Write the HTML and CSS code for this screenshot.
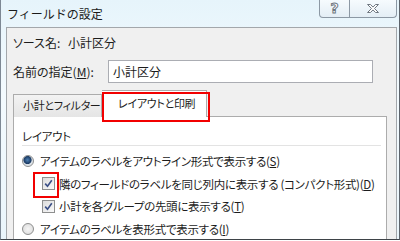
FILE: index.html
```html
<!DOCTYPE html>
<html lang="ja">
  <head>
    <meta charset="utf-8">
    <title>フィールドの設定</title>
    <link rel="stylesheet" href="styles.css">
  </head>
  <body>
    <div class="window">
      <div class="titlebar">
        <span class="title">フィールドの設定</span>
        <div class="caption">
          <span class="cbtn help">?</span>
          <span class="cbtn close">
            <svg width="14" height="11" viewBox="0 0 14 11">
              <path d="M1.5 1.5h3l2.5 2.6 2.5-2.6h3l-4 4 4 4h-3l-2.5-2.6-2.5 2.6h-3l4-4z" fill="#fff" stroke="#6f7780" stroke-width="1" stroke-linejoin="round"/>
            </svg>
          </span>
        </div>
      </div>
      <div class="client">
        <div class="row source">
          <span class="src-label">ソース名:</span><span>小計区分</span>
        </div>
        <div class="row name">
          <label class="name-label">名前の指定(<u>M</u>):</label>
          <div class="input">小計区分</div>
        </div>
        <div class="tabs">
          <div class="tab">小計とフィルター</div>
          <div class="tab active marked">レイアウトと印刷</div>
        </div>
        <div class="panel">
          <div class="group-title">レイアウト</div>
          <div class="opt">
            <span class="radio on"></span>
            <span>アイテムのラベルをアウトライン形式で表示する(<u>S</u>)</span>
          </div>
          <div class="opt sub">
            <span class="check marked">
              <svg width="11" height="11" viewBox="0 0 11 11"><path d="M2.2 5.6l2.3 2.6L8.8 2.2" fill="none" stroke="#3b4f86" stroke-width="1.6"/></svg>
            </span>
            <span>隣のフィールドのラベルを同じ列内に表示する (コンパクト形式)(<u>D</u>)</span>
          </div>
          <div class="opt sub">
            <span class="check">
              <svg width="11" height="11" viewBox="0 0 11 11"><path d="M2.2 5.6l2.3 2.6L8.8 2.2" fill="none" stroke="#3b4f86" stroke-width="1.6"/></svg>
            </span>
            <span>小計を各グループの先頭に表示する(<u>T</u>)</span>
          </div>
          <div class="opt">
            <span class="radio"></span>
            <span>アイテムのラベルを表形式で表示する(<u>I</u>)</span>
          </div>
        </div>
      </div>
    </div>
  </body>
</html>
```

FILE: styles.css
```css
html, body {margin:0;padding:0;background:#fff}
body {font:12px/20px "Noto Sans CJK JP", "Noto Sans", sans-serif;color:#1c1c1c;font-feature-settings:"palt";white-space:nowrap}
u {text-decoration:underline;text-underline-offset:1px}

.window {box-sizing:border-box;width:400px;height:240px;overflow:hidden;display:flex;flex-direction:column;
  background:linear-gradient(180deg,#e6f4fb 0%,#f3fafe 40%,#eaf5fb 100%);
  border-left:1px solid #7d8894;border-right:1px solid #5d646c;border-bottom:1px solid #3e4348;padding:0 2px 0 5px}

.titlebar {height:27px;display:flex;align-items:flex-start;flex:none}
.title {font-size:12px;line-height:16px;padding:6px 0 0 1px;color:#1a1a1a;font-feature-settings:normal}
.caption {margin-left:auto;display:flex;margin-right:0}
.cbtn {box-sizing:border-box;height:18px;display:flex;align-items:center;justify-content:center;
  background:linear-gradient(180deg,#f6fbfe,#e4eef5);border:1px solid #8c98a4;border-top:0}
.help {width:31px;border-radius:0 0 0 4px;font:bold 14px/1 "DejaVu Sans", sans-serif;color:#fff;
  -webkit-text-stroke:1px #6f7780;padding-bottom:1px}
.close {width:47px;border-left:0;border-radius:0 0 4px 0}

.client {flex:1;background:#f0f0f0;border:1px solid #a3a7ab;border-bottom:0;padding:0 9px 0 6px;overflow:hidden}

.row {display:flex;align-items:center}
.source {margin-top:5px;height:20px}
.src-label {width:55px}
.name {margin-top:7px;height:23px}
.name-label {width:95px}
.input {box-sizing:border-box;width:265px;height:23px;border:1px solid #abadb3;background:#fff;padding:0 4px;line-height:21px}

.tabs {display:flex;align-items:flex-end;margin-top:7px;height:26px;position:relative;z-index:1;font-size:11px;letter-spacing:-0.3px}
.tab {box-sizing:border-box;height:23px;border:1px solid #acacac;border-bottom:0;
  background:linear-gradient(180deg,#f3f3f3,#e5e5e5);line-height:21px;padding:0 0 0 9px;width:89px;margin-bottom:-1px}
.tab.active {height:27px;width:105px;background:#fff;padding:2px 0 0 16px;margin-bottom:-1px;border-left:0}
.marked {position:relative}
.tab.marked::after {content:"";position:absolute;left:0;top:1px;width:108px;height:30px;box-sizing:border-box;border:2px solid #f20000}

.panel {height:200px;background:#fff;border:1px solid #acacac;padding:0 5px 0 8px;font-size:11.5px;letter-spacing:-0.3px}
.group-title {height:17px;padding-top:11px;line-height:17px;border-bottom:1px solid #e3e3e3;margin-bottom:4px}

.opt {display:flex;align-items:center;height:22.5px}
.opt.sub {padding-left:20px}
.radio {box-sizing:border-box;width:12px;height:12px;border-radius:50%;border:1px solid #8e8f8f;margin-right:6px;flex:none;
  background:radial-gradient(circle at 50% 50%,#f5f5f5 0,#e4e4e4 60%,#d0d0d0 100%)}
.radio.on {background:radial-gradient(circle at 45% 40%,#4d80b4 0,#1b3a63 45%,#d6dde4 55%,#eef0f2 100%)}
.check {box-sizing:border-box;width:13px;height:13px;border:1px solid #8e8f8f;background:linear-gradient(135deg,#dcdcdc,#fafafa);
  margin-right:4px;display:flex;align-items:center;justify-content:center;flex:none}
.check.marked {position:relative}
.check.marked::after {content:"";position:absolute;left:-10px;top:-6px;width:26px;height:26px;box-sizing:border-box;border:2px solid #f20000}
```
